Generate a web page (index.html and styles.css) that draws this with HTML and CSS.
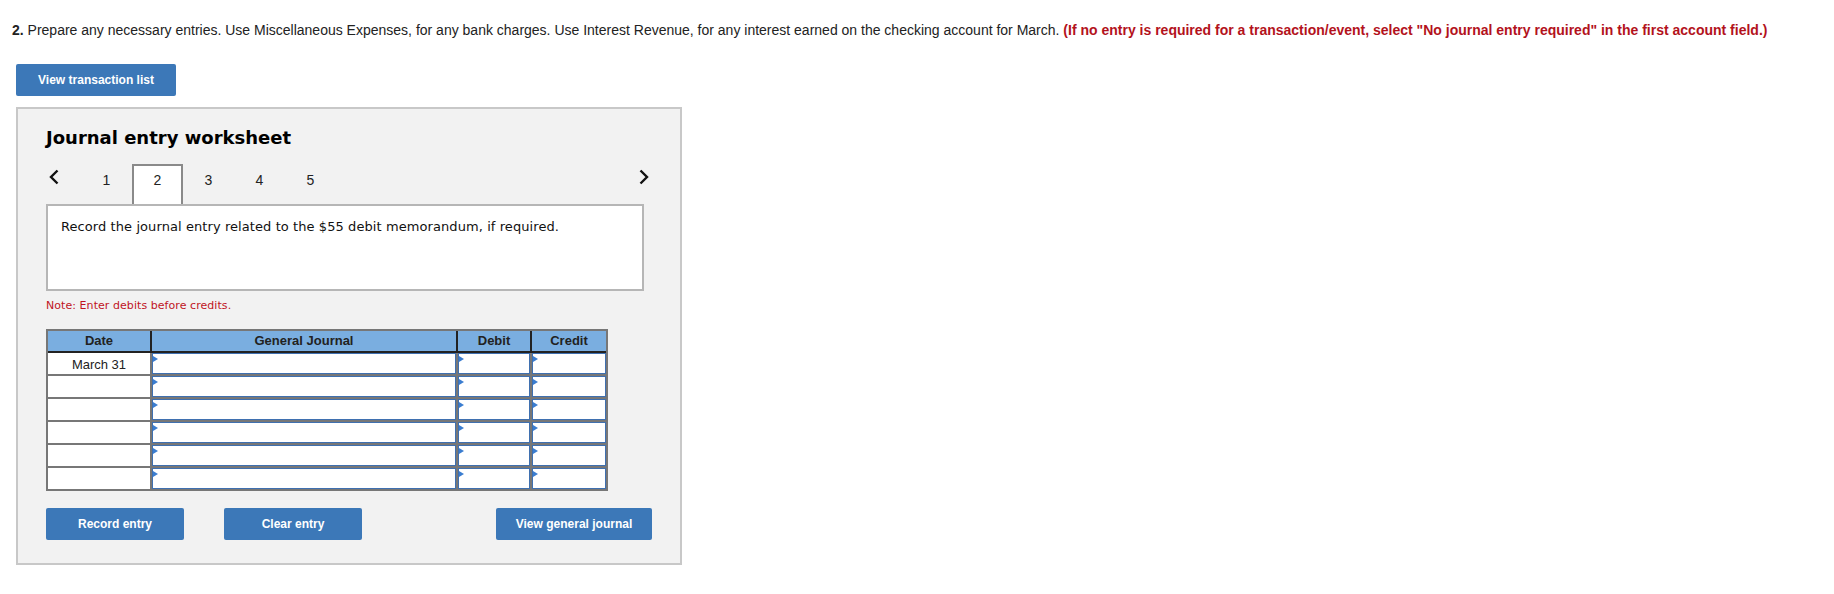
FILE: index.html
```html
<!DOCTYPE html>
<html lang="en">
<head>
<meta charset="utf-8">
<title>Journal entry worksheet</title>
<link rel="stylesheet" href="styles.css">
</head>
<body>
<p class="instructions"><b>2.</b> Prepare any necessary entries. Use Miscellaneous Expenses, for any bank charges. Use Interest Revenue, for any interest earned on the checking account for March. <b class="alert">(If no entry is required for a transaction/event, select "No journal entry required" in the first account field.)</b></p>
<div class="content">
  <button class="btn btn-list" type="button">View transaction list</button>
  <section class="panel">
    <h2 class="panel-title">Journal entry worksheet</h2>
    <div class="tabs">
      <span class="chev chev-left"><svg width="10" height="16" viewBox="0 0 10 16"><polyline points="8.5,1.5 2,8 8.5,14.5" fill="none" stroke="#111" stroke-width="2.4"/></svg></span>
      <span class="tab">1</span>
      <span class="tab active">2</span>
      <span class="tab">3</span>
      <span class="tab">4</span>
      <span class="tab">5</span>
      <span class="chev chev-right"><svg width="10" height="16" viewBox="0 0 10 16"><polyline points="1.5,1.5 8,8 1.5,14.5" fill="none" stroke="#111" stroke-width="2.4"/></svg></span>
    </div>
    <div class="prompt">Record the journal entry related to the $55 debit memorandum, if required.</div>
    <p class="note">Note: Enter debits before credits.</p>
    <div class="journal">
      <div class="journal-head">
        <div class="th">Date</div>
        <div class="th">General Journal</div>
        <div class="th">Debit</div>
        <div class="th">Credit</div>
      </div>
      <div class="journal-body">
        <div class="date">March 31</div><div class="field"></div><div class="field"></div><div class="field"></div>
        <div class="date"></div><div class="field"></div><div class="field"></div><div class="field"></div>
        <div class="date"></div><div class="field"></div><div class="field"></div><div class="field"></div>
        <div class="date"></div><div class="field"></div><div class="field"></div><div class="field"></div>
        <div class="date"></div><div class="field"></div><div class="field"></div><div class="field"></div>
        <div class="date"></div><div class="field"></div><div class="field"></div><div class="field"></div>
      </div>
    </div>
    <div class="actions">
      <button class="btn btn-record" type="button">Record entry</button>
      <button class="btn btn-clear" type="button">Clear entry</button>
      <button class="btn btn-view" type="button">View general journal</button>
    </div>
  </section>
</div>
</body>
</html>
```

FILE: styles.css
```css
html, body {
  margin: 0;
  padding: 0;
  background: #ffffff;
}

body {
  font-family: "Liberation Sans", Arial, sans-serif;
  color: #222;
}

.instructions {
  margin: 22px 0 0 0;
  padding: 0 12px;
  font-size: 14px;
  line-height: 16px;
  color: #222;
}

.instructions b {
  font-weight: bold;
}

.alert {
  color: #b3121c;
}

.content {
  padding-left: 16px;
}

.btn {
  display: inline-flex;
  flex-shrink: 0;
  align-items: center;
  justify-content: center;
  height: 32px;
  padding: 0;
  border: none;
  border-radius: 2px;
  background: #3c78b8;
  color: #ffffff;
  font-family: "Liberation Sans", Arial, sans-serif;
  font-weight: bold;
  font-size: 12px;
}

.btn-list {
  width: 160px;
  margin-top: 26px;
}

.panel {
  box-sizing: border-box;
  width: 666px;
  margin-top: 11px;
  padding: 18px 36px 23px 28px;
  border: 2px solid #c8c8c8;
  background: #f2f2f2;
}

.panel-title {
  margin: 0;
  font-family: "DejaVu Sans", Verdana, sans-serif;
  font-weight: bold;
  font-size: 18px;
  line-height: 22px;
  color: #000;
}

.tabs {
  display: flex;
  align-items: flex-start;
  height: 40px;
  margin-top: 15px;
}

.chev {
  display: flex;
  padding-top: 5px;
}

.chev-left {
  width: 35px;
  padding-left: 3px;
  box-sizing: border-box;
}

.chev-right {
  margin-left: auto;
  margin-right: -5px;
}

.tab {
  box-sizing: border-box;
  width: 51px;
  height: 40px;
  padding-top: 6px;
  text-align: center;
  font-family: "Liberation Sans", Arial, sans-serif;
  font-size: 14px;
  line-height: 16px;
  color: #222;
  border: 2px solid transparent;
  border-bottom: none;
}

.tab.active {
  border-color: #8a8a8a;
  background: #ffffff;
}

.prompt {
  box-sizing: border-box;
  height: 87px;
  padding: 13px 13px;
  border: 2px solid #b6b6b6;
  background: #ffffff;
  font-family: "DejaVu Sans", Verdana, sans-serif;
  font-size: 13px;
  line-height: 16px;
  letter-spacing: 0.08px;
  color: #111;
}

.note {
  margin: 8px 0 0 0;
  font-family: "DejaVu Sans", Verdana, sans-serif;
  font-size: 11px;
  line-height: 13px;
  letter-spacing: 0.06px;
  color: #c0141e;
}

.journal {
  width: fit-content;
  margin-top: 17px;
  border: 2px solid #777777;
}

.journal-head,
.journal-body {
  display: grid;
  grid-template-columns: 102px 304px 72px 74px;
  column-gap: 2px;
}

.journal-head {
  background: #222222;
  padding-bottom: 2px;
}

.journal-body {
  background: #777777;
  row-gap: 2px;
  grid-auto-rows: 21px;
}

.th {
  height: 20px;
  background: #7aaee0;
  text-align: center;
  font-weight: bold;
  font-size: 13px;
  line-height: 20px;
  color: #222;
}

.date {
  box-sizing: border-box;
  background: #ffffff;
  padding-top: 2px;
  text-align: center;
  font-size: 13px;
  line-height: 19px;
  color: #222;
}

.field {
  position: relative;
  box-sizing: border-box;
  background: #ffffff;
  border: 1px solid #3f70b0;
}

.field::before {
  content: "";
  position: absolute;
  top: 2px;
  left: 0;
  border-left: 5px solid #3a7dd0;
  border-top: 3px solid transparent;
  border-bottom: 3px solid transparent;
}

.actions {
  display: flex;
  margin-top: 17px;
}

.btn-record {
  width: 138px;
}

.btn-clear {
  width: 138px;
  margin-left: 40px;
}

.btn-view {
  width: 156px;
  margin-left: 134px;
}
```
